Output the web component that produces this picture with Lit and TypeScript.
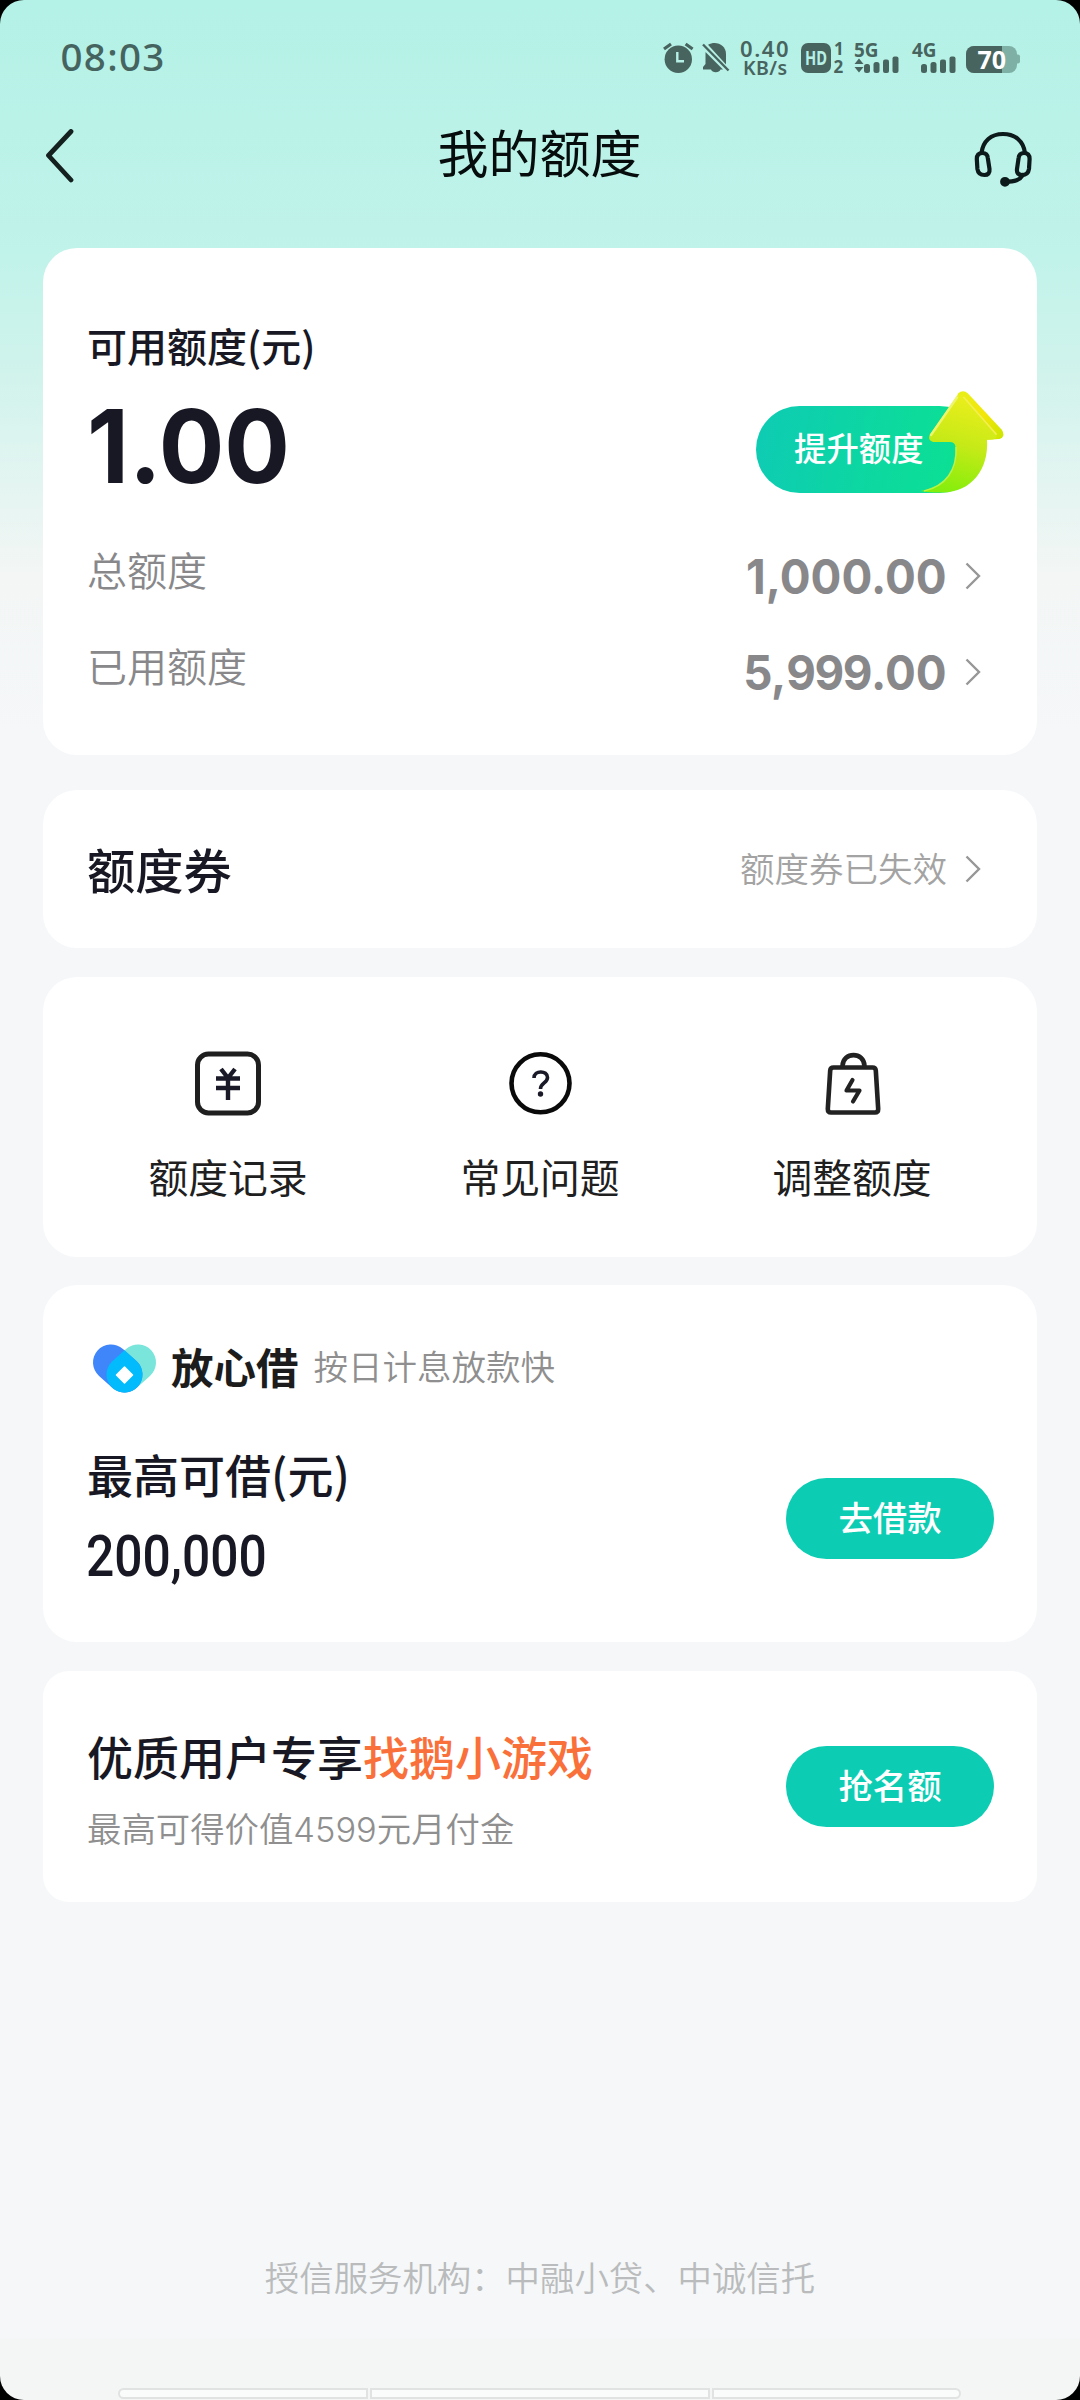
import { LitElement, html, css, svg } from "lit";
import { customElement, property } from "lit/decorators.js";

const chevron = html`<svg class="chev" width="16" height="28" viewBox="0 0 16 28">
  <path d="M1.5 1.5 L14 14 L1.5 26.5" fill="none" stroke="#979797" stroke-width="2.4" />
</svg>`;

const bars = (x: number) => svg`
  <rect x=${x} y="24" width="6" height="9" rx="2.5" />
  <rect x=${x + 9.5} y="22" width="6" height="11" rx="2.5" />
  <rect x=${x + 19} y="19.5" width="6" height="13.5" rx="2" />
  <rect x=${x + 28.5} y="16.5" width="6" height="16.5" rx="2" />`;

// "5" and "9" are tracked tighter than the other digits.
const digits = (value: string) =>
  value
    .split(/([59])/)
    .filter(Boolean)
    .map((part) => (/[59]/.test(part) ? html`<span class="tight">${part}</span>` : part));

@customElement("status-bar")
class StatusBar extends LitElement {
  static styles = css`
    :host {
      display: flex;
      justify-content: space-between;
      height: 116px;
      padding: 0 60px 0 60px;
      box-sizing: border-box;
    }
    .time {
      font: 500 38.500px/1 "Noto Sans", sans-serif;
      letter-spacing: 1.300px;
      color: #45645f;
      padding-top: 37px;
      padding-left: 0.5px;
    }
    .icons {
      display: flex;
      padding-top: 40px;
      fill: #48645f;
      font-family: "Noto Sans", sans-serif;
    }
    svg {
      display: block;
      overflow: visible;
    }
    .alarm { margin-right: 9px; }
    .bell { margin-right: 10px; }
    .speed { margin-right: 12px; font-weight: 600; }
    .hd { margin-right: 10px; font-weight: 700; }
    .five { margin-right: 12px; font-weight: 700; }
    .four { margin-right: 9px; font-weight: 700; }
  `;
  render() {
    return html`
      <div class="time">08:03</div>
      <div class="icons">
        <svg class="alarm" width="29" height="36" viewBox="0 0 29 36">
          <circle cx="14.3" cy="19.3" r="13.7" />
          <path d="M0 9 L7 4 M28.6 9 L21.6 4" stroke="#48645f" stroke-width="3.2" fill="none" />
          <path d="M13.3 12 V21.2 H20" stroke="#b6f0e6" stroke-width="2.4" fill="none" />
        </svg>
        <svg class="bell" width="28" height="36" viewBox="0 0 28 36">
          <path d="M6 4.8 C14 .2 24 5 24 14 V24.5 Z" />
          <path d="M2.5 11 L21 29.5 H18.5 A5 4 0 0 1 9 29.5 H1 V27 L3.5 24 V12 Z" />
          <path d="M1 4.5 L26.5 30.5" stroke="#48645f" stroke-width="2.4" />
        </svg>
        <svg class="speed" width="49" height="36" viewBox="0 0 49 36">
          <text x="0" y="17" font-size="22" textLength="48.5">0.40</text>
          <text x="3" y="34.6" font-size="19.5" textLength="44">KB/s</text>
        </svg>
        <svg class="hd" width="43" height="36" viewBox="0 0 43 36">
          <rect x="0" y="3" width="30" height="30" rx="7" />
          <text x="4" y="25" font-size="19" textLength="22" lengthAdjust="spacingAndGlyphs" fill="#b6f0e6">HD</text>
          <text x="33" y="15.3" font-size="17">1</text>
          <text x="32.5" y="32.5" font-size="17">2</text>
        </svg>
        <svg class="five" width="46" height="36" viewBox="0 0 46 36">
          <text x="0" y="17" font-size="19.5" textLength="24.5" lengthAdjust="spacingAndGlyphs">5G</text>
          <path d="M0.5 24 L5 18.5 L9.500 24 Z M0.5 27 L5 32.500 L9.500 27 Z" />
          ${bars(10)}
        </svg>
        <svg class="four" width="45" height="36" viewBox="0 0 45 36">
          <text x="0" y="17" font-size="19.5" textLength="24.500" lengthAdjust="spacingAndGlyphs">4G</text>
          ${bars(9)}
        </svg>
        <svg width="54" height="36" viewBox="0 0 54 36">
          <defs>
            <clipPath id="b"><rect x="0" y="6" width="51" height="27" rx="8" /></clipPath>
          </defs>
          <g clip-path="url(#b)">
            <rect x="0" y="6" width="51" height="27" fill="#7eb0a6" />
            <rect x="0" y="6" width="36" height="27" />
          </g>
          <path d="M51 14.500 h1 q2 0 2 2 v5 q0 2 -2 2 h-1 z" fill="#7eb0a6" />
          <text x="11.500" y="29" font-size="25" font-weight="700" textLength="28.500" fill="#fff">70</text>
        </svg>
      </div>
    `;
  }
}

@customElement("nav-bar")
class NavBar extends LitElement {
  @property() heading = "";
  static styles = css`
    :host {
      display: flex;
      align-items: flex-start;
      justify-content: space-between;
      height: 132px;
      padding: 0 48px 0 45px;
      box-sizing: border-box;
    }
    .title {
      font: 400 51px/70px "Noto Sans CJK SC", sans-serif;
      color: #060d0c;
    }
    .back { margin-top: 13px; margin-right: 31px; }
    .service { margin-top: 15px; }
  `;
  render() {
    return html`
      <svg class="back" width="29" height="54" viewBox="0 0 29 54">
        <path d="M26 2.500 L3.500 26.500 L26 51" fill="none" stroke="#14211f" stroke-width="4.800" stroke-linecap="round" stroke-linejoin="round" />
      </svg>
      <div class="title">${this.heading}</div>
      <svg class="service" width="58" height="57" viewBox="0 0 58 57" fill="none" stroke="#0d1a1c" stroke-width="4.200" stroke-linecap="round">
        <path d="M7.500 22 C9 10 17 3 29 3 C41 3 49.500 10 51 22" />
        <path d="M2.800 28 C2.800 24 5 22 8.500 22 C12 22 13.500 23.500 13.800 27 L15.500 38 C16 42 14 44 10.500 44 C6.500 44 4 42 3.400 38 Z" />
        <path d="M55.600 28 C55.600 24 53.500 22 50 22 C46.500 22 45 23.500 44.600 27 L43 38 C42.500 42 44.500 44 48 44 C52 44 54.400 42 55 38 Z" />
        <path d="M49 44 C46 49 41 50.500 31 50.800" />
        <circle cx="31" cy="50.800" r="2.800" fill="#0d1a1c" />
      </svg>
    `;
  }
}

@customElement("app-root")
class AppRoot extends LitElement {
  static styles = css`
    :host {
      display: block;
      width: 1080px;
      height: 2400px;
      background: #000;
      font-family: "Noto Sans CJK SC", sans-serif;
      color: #181824;
    }
    .page {
      display: flex;
      flex-direction: column;
      height: 2400px;
      border-radius: 24px;
      overflow: hidden;
      background: linear-gradient(#b4f1e6 0, #c0f3ea 250px, #d0f3ec 370px, #f3f6f5 575px, #f5f7f9 740px, #f5f7f9 2337px, #f4f6f5 2340px);
    }
    .card {
      box-sizing: border-box;
      margin: 0 43px 29px;
      border-radius: 34px;
      background: #fff;
      padding: 0 43px 0 44px;
    }
    .quota { height: 507px; margin-bottom: 35px; padding-top: 69px; }
    .label { font-size: 40px; line-height: 56px; font-weight: 500; }
    .headline {
      display: flex;
      justify-content: space-between;
      align-items: center;
      height: 88px;
      margin-top: 32px;
    }
    .amount, .num { font-family: Inter, sans-serif; font-weight: 700; }
    .amount { font-size: 102px; line-height: 88px; padding-bottom: 6px; transform: scaleX(0.955); transform-origin: 0 0; }
    .tight { letter-spacing: -0.032em; }
    .raise {
      position: relative;
      box-sizing: border-box;
      width: 227px;
      height: 87px;
      margin-right: 11px;
      padding-left: 38px;
      border-radius: 44px;
      background: linear-gradient(100deg, #0ecbb4, #0be38f);
      color: #fff;
      font-size: 32.400px;
      font-weight: 500;
      line-height: 82px;
    }
    .arrow { position: absolute; left: 163px; top: -16px; }
    .row { display: flex; align-items: center; height: 96px; color: #88888b; }
    .quota .first { margin-top: 35px; }
    .row .name { flex: 1; font-size: 40px; line-height: 56px; padding-bottom: 14px; font-weight: 350; }
    .row .num { font-size: 48.500px; line-height: 60px; padding-top: 2px; transform: scaleX(0.943); transform-origin: 100% 0; }
    .chev { margin: 0 13.500px 0 17.500px; }

    .coupon { display: flex; align-items: center; height: 158px; }
    .coupon .name { flex: 1; font-size: 48.200px; font-weight: 500; line-height: 60px; padding-bottom: 2px; }
    .coupon .note { font-size: 34.500px; color: #a3a3a3; font-weight: 350; line-height: 50px; padding-bottom: 4px; }

    .menu { display: grid; grid-template-columns: repeat(3, 1fr); height: 280px; margin-bottom: 28px; padding: 73px 29px 0 29px; }
    .entry { display: flex; flex-direction: column; align-items: center; }
    .entry span { font-size: 39.800px; line-height: 56px; color: #1f1f1f; margin-top: 32px; }

    .loan { height: 357px; padding-top: 54px; }
    .brand { display: flex; align-items: center; height: 58px; }
    .brand svg { margin-left: 6px; margin-top: -2px; overflow: visible; }
    .brand .logo { font-size: 42.500px; font-weight: 700; line-height: 58px; margin-left: 14px; padding-bottom: 5px; color: #1c1c1c; }
    .brand .desc { font-size: 34.500px; font-weight: 350; line-height: 58px; color: #8f8f8f; margin-left: 15px; padding-bottom: 6px; }
    .split { display: flex; justify-content: space-between; }
    .loan .split { margin-top: 44px; }
    .max { font-size: 46px; font-weight: 500; line-height: 64px; }
    .sum { font: 500 57.500px/64px Roboto, sans-serif; transform: scaleX(0.865); transform-origin: 0 0; margin-top: 20px; margin-left: -1px; }
    .pill {
      width: 208px;
      height: 81px;
      border-radius: 41px;
      background: #0ccdb3;
      color: #fff;
      font-size: 34.400px;
      font-weight: 500;
      line-height: 76px;
      text-align: center;
    }
    .loan .pill { margin-top: 37px; }
    .promo { height: 231px; padding-top: 52px; border-radius: 26px; }
    .promo .hot { color: #f9703a; }
    .sub { font: 350 34.400px/46px "Noto Sans CJK SC", sans-serif; color: #8f8f8f; margin-top: 17px; }
    .sub .n { font-family: Inter, sans-serif; font-weight: 300; }
    .promo .pill { margin-top: 23px; }
    .footer {
      margin-top: 320px;
      text-align: center;
      font-size: 34.400px;
      font-weight: 350;
      line-height: 50px;
      color: #b9bbbc;
    }
    .handles {
      display: grid;
      grid-template-columns: 250px 340px 1fr;
      gap: 2px;
      margin: auto 119px 1px 118px;
      height: 11px;
    }
    .handle { box-sizing: border-box; border: 2px solid #e0e3e2; background: #fafbfb; }
    .handle:first-child { border-radius: 6px 0 0 6px; }
    .handle:last-child { border-radius: 0 6px 6px 0; }
  `;

  render() {
    return html`
      <div class="page">
        <status-bar></status-bar>
        <nav-bar heading="我的额度"></nav-bar>

        <section class="card quota">
          <div class="label">可用额度(元)</div>
          <div class="headline">
            <div class="amount">1.00</div>
            <div class="raise">
              提升额度
              <svg class="arrow" width="86" height="106" viewBox="0 0 86 106">
                <defs>
                  <linearGradient id="body" x1="0.600" y1="0" x2="0.400" y2="1">
                    <stop offset="0" stop-color="#ecee1c" />
                    <stop offset="0.500" stop-color="#c6ea17" />
                    <stop offset="1" stop-color="#85ee0c" />
                  </linearGradient>
                  <linearGradient id="edge" x1="0" y1="0" x2="1" y2="1">
                    <stop offset="0" stop-color="#e6f01a" />
                    <stop offset="0.550" stop-color="#f3e60a" />
                    <stop offset="1" stop-color="#c9e600" />
                  </linearGradient>
                </defs>
                <path d="M39 3.500 Q44 -1 49 3.500 L83 40 Q87 47 80 49 L66 50 L36 12 Z" fill="url(#edge)" />
                <path d="M38 6 Q41.500 3 45 7.500 L77 43 Q79 49 73 49.500 H68 C70 80 52 102 24 102.500 C16 102.600 9 102.500 2 101 C27 96 38 80 36.500 57 Q36 52 31 52 H14 Q8 50 11 44.500 Z" fill="url(#body)" />
                <path d="M12 45 L38 7.500" stroke="#eef56a" stroke-width="2.500" stroke-linecap="round" />
                <path d="M45 7.500 L77 44" stroke="#f3ef4e" stroke-width="1.800" stroke-linecap="round" />
                <path d="M5 101 C27 96 38 80 37 57" fill="none" stroke="#cdf55c" stroke-opacity="0.700" stroke-width="1.500" />
              </svg>
            </div>
          </div>
          <div class="row first"><span class="name">总额度</span><span class="num">${digits("1,000.00")}</span>${chevron}</div>
          <div class="row"><span class="name">已用额度</span><span class="num">${digits("5,999.00")}</span>${chevron}</div>
        </section>

        <section class="card coupon">
          <span class="name">额度券</span><span class="note">额度券已失效</span>${chevron}
        </section>

        <section class="card menu">
          <div class="entry">
            <svg width="68" height="66" viewBox="0 0 68 66" fill="none" stroke="#1f1f1f">
              <rect x="3.500" y="4" width="61" height="59" rx="11" stroke-width="5" />
              <path d="M27 19 L34 28 L41 19 M22 28.500 H46 M22 38 H46 M34 28 V50" stroke="#191928" stroke-width="4.400" />
            </svg>
            <span>额度记录</span>
          </div>
          <div class="entry">
            <svg width="66" height="66" viewBox="0 0 66 66" fill="none">
              <circle cx="33.500" cy="33.300" r="29" stroke="#0a0a0a" stroke-width="4.600" />
              <path d="M27 28 C27 20 40.500 20 40.500 27.500 C40.500 33 33.500 33 33.500 39" stroke="#191928" stroke-width="3.600" />
              <circle cx="33.500" cy="44" r="2.700" fill="#191928" />
            </svg>
            <span>常见问题</span>
          </div>
          <div class="entry">
            <svg width="58" height="66" viewBox="-1 0 58 66" fill="none" stroke="#222" stroke-width="4.600" stroke-linejoin="round" stroke-linecap="round">
              <path d="M9.500 17.500 H48.500 Q51.500 17.500 51.800 20.500 L54.200 59 Q54.200 62.500 51 62.500 H7 Q3.800 62.500 3.800 59 L6.200 20.500 Q6.500 17.500 9.500 17.500 Z" />
              <path d="M18.500 16 C19 1.500 40 1.500 40.500 16" />
              <path d="M28.500 30 L22.500 40.500 H35.500 L29 51.500" stroke-width="4.200" />
            </svg>
            <span>调整额度</span>
          </div>
        </section>

        <section class="card loan">
          <div class="brand">
            <svg width="64" height="54" viewBox="0 0 64 54">
              <path d="M45 22.500 L31.500 34.500" stroke="#7ae5da" stroke-width="36" stroke-linecap="round" />
              <path d="M18 22.500 L31.500 34.500" stroke="#3f86fb" stroke-width="36" stroke-linecap="round" />
              <path d="M31.500 10.300 L19.300 21.300 A18 18 0 1 0 43.700 21.300 Z" fill="#02bbfd" />
              <path d="M31.500 27 L39.500 35 L31.500 43 L23.500 35 Z" fill="#fff" stroke="#fff" stroke-width="1.500" stroke-linejoin="round" />
            </svg>
            <span class="logo">放心借</span>
            <span class="desc">按日计息放款快</span>
          </div>
          <div class="split">
            <div>
              <div class="max">最高可借(元)</div>
              <div class="sum">200,000</div>
            </div>
            <div class="pill">去借款</div>
          </div>
        </section>

        <section class="card promo">
          <div class="split">
            <div>
              <div class="max">优质用户专享<span class="hot">找鹅小游戏</span></div>
              <div class="sub">最高可得价值<span class="n">4599</span>元月付金</div>
            </div>
            <div class="pill">抢名额</div>
          </div>
        </section>

        <div class="footer">授信服务机构：中融小贷、中诚信托</div>
        <div class="handles"><i class="handle"></i><i class="handle"></i><i class="handle"></i></div>
      </div>
    `;
  }
}
